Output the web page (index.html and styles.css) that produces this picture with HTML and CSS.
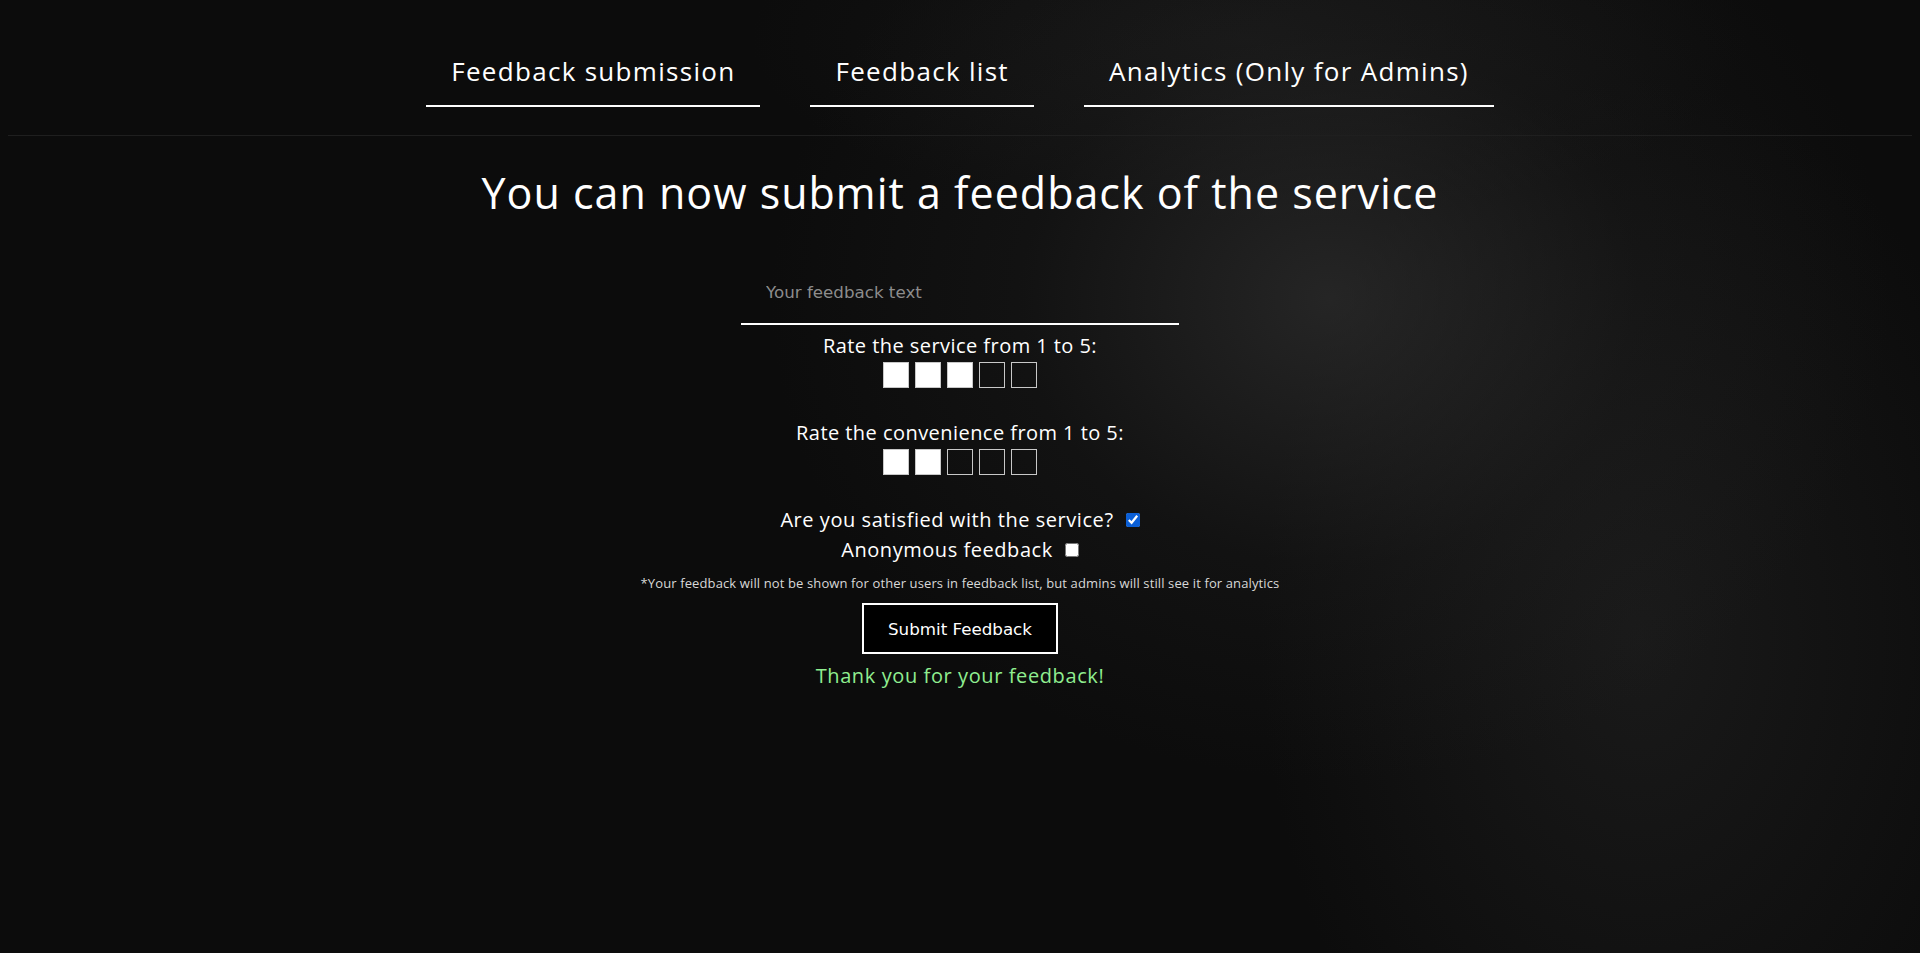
FILE: index.html
```html
<!DOCTYPE html>
<html lang="en">
<head>
<meta charset="utf-8">
<title>Feedback</title>
<link rel="stylesheet" href="styles.css">
</head>
<body>
<header class="topbar">
  <nav class="tabs">
    <a class="tab" href="#">Feedback submission</a>
    <a class="tab" href="#">Feedback list</a>
    <a class="tab" href="#">Analytics (Only for Admins)</a>
  </nav>
</header>
<main class="content">
  <h1 class="title">You can now submit a feedback of the service</h1>
  <form class="form">
    <input class="text-input" type="text" placeholder="Your feedback text">
    <div class="rating">
      <p class="label">Rate the service from 1 to 5:</p>
      <div class="boxes">
        <span class="box filled"></span><span class="box filled"></span><span class="box filled"></span><span class="box"></span><span class="box"></span>
      </div>
    </div>
    <div class="rating second">
      <p class="label">Rate the convenience from 1 to 5:</p>
      <div class="boxes">
        <span class="box filled"></span><span class="box filled"></span><span class="box"></span><span class="box"></span><span class="box"></span>
      </div>
    </div>
    <label class="check-row first">Are you satisfied with the service? <input class="check" type="checkbox" checked></label>
    <label class="check-row">Anonymous feedback <input class="check" type="checkbox"></label>
    <p class="note">*Your feedback will not be shown for other users in feedback list, but admins will still see it for analytics</p>
    <button class="submit" type="button">Submit Feedback</button>
    <p class="thanks">Thank you for your feedback!</p>
  </form>
</main>
</body>
</html>
```

FILE: styles.css
```css
html {
  min-height: 100%;
  background:
    radial-gradient(ellipse 560px 480px at 1330px 300px, rgba(58,58,58,0.55), rgba(40,40,40,0.22) 55%, transparent 100%),
    radial-gradient(ellipse 380px 560px at 1640px 640px, rgba(42,42,42,0.45), transparent 100%),
    radial-gradient(ellipse 500px 180px at 1250px 40px, rgba(40,40,40,0.35), transparent 100%),
    #0c0c0c;
}

body {
  margin: 8px;
  color: #ffffff;
  font-family: "Open Sans", "Liberation Sans", sans-serif;
}

.topbar {
  border-bottom: 1px solid #1f1f1f;
  padding-top: 44px;
  padding-bottom: 28px;
}

.tabs {
  display: flex;
  justify-content: center;
  gap: 50px;
}

.tab {
  color: #ffffff;
  text-decoration: none;
  font-size: 26px;
  font-weight: 500;
  line-height: 39px;
  letter-spacing: 1.3px;
  padding: 0 25px 14px;
  border-bottom: 2px solid #ffffff;
}

.content {
  display: flex;
  flex-direction: column;
  align-items: center;
}

.title {
  margin: 32px 0 0;
  font-size: 43px;
  font-weight: 400;
  line-height: 50px;
  letter-spacing: 1px;
}

.form {
  display: flex;
  flex-direction: column;
  align-items: center;
  margin-top: 43px;
}

.text-input {
  box-sizing: border-box;
  width: 438px;
  height: 64px;
  padding: 0 25px;
  border: none;
  border-bottom: 2px solid #ffffff;
  background: transparent;
  color: #ffffff;
  font-family: "DejaVu Sans", sans-serif;
  font-size: 16.7px;
  outline: none;
}

.text-input::placeholder {
  color: #8c8c8c;
}

.rating {
  display: flex;
  flex-direction: column;
  align-items: center;
  margin-top: 7px;
}

.rating.second {
  margin-top: 31px;
}

.label {
  margin: 0;
  font-size: 20px;
  line-height: 28px;
  letter-spacing: 0.45px;
}

.boxes {
  display: flex;
  gap: 6px;
  margin-top: 2px;
}

.box {
  box-sizing: border-box;
  width: 26px;
  height: 26px;
  border: 1px solid #c8c8c8;
}

.box.filled {
  background: #ffffff;
}

.check-row {
  display: flex;
  align-items: center;
  font-size: 20px;
  line-height: 30px;
  letter-spacing: 0.55px;
}

.check-row.first {
  margin-top: 30px;
}

.check {
  width: 14px;
  height: 14px;
  margin: 0 0 0 12px;
  accent-color: #0b5fd6;
}

.note {
  margin: 8px 0 0;
  font-size: 13px;
  line-height: 20px;
  letter-spacing: 0.12px;
  color: #d8d8d8;
}

.submit {
  box-sizing: border-box;
  width: 196px;
  height: 51px;
  margin-top: 10px;
  background: #000000;
  color: #ffffff;
  border: 2px solid #ffffff;
  font-family: "DejaVu Sans", sans-serif;
  font-size: 16.7px;
}

.thanks {
  margin: 7px 0 0;
  font-size: 20px;
  line-height: 30px;
  letter-spacing: 0.6px;
  color: #90ee90;
}
```
